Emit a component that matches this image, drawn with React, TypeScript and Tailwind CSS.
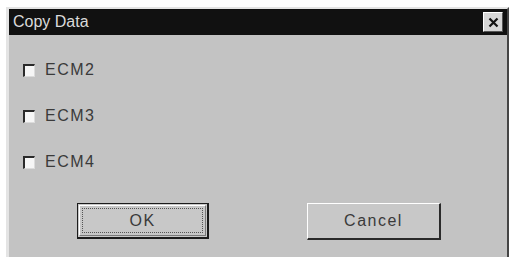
const items = ["ECM2", "ECM3", "ECM4"];

function CheckRow({ label }: { label: string }) {
  return (
    <div className="flex h-[46px] items-center">
      <span className="box-border h-[13px] w-[12px] border-l-2 border-t-2 border-b border-r border-l-[#2a2a2a] border-t-[#2a2a2a] border-b-[#dcdcdc] border-r-[#dcdcdc] bg-[#f6f6f6]" />
      <span className="ml-[10px] text-[16px] leading-none tracking-[1.5px] text-[#3a3a3a]">
        {label}
      </span>
    </div>
  );
}

export default function App() {
  return (
    <div
      className="h-[257px] w-[512px] overflow-hidden bg-white pl-[6px] pt-[7px]"
      style={{ fontFamily: '"Liberation Sans", Arial, sans-serif' }}
    >
      <div className="box-border flex h-[262px] w-[503px] flex-col border-l-[3px] border-r-2 border-t-2 border-l-[#e4e4e4] border-r-[#454545] border-t-[#e4e4e4] bg-[#c3c3c3]">
        {/* title bar */}
        <div className="flex h-[26px] items-center justify-between bg-[#111111] pl-[4px] pr-[4px]">
          <span className="text-[16px] leading-none text-[#dadada]">Copy Data</span>
          <button className="box-border flex h-[20px] w-[20px] items-center justify-center border border-l-white border-t-white border-r-[#555] border-b-[#555] bg-[#d6d6d6]">
            <svg width="11" height="11" viewBox="0 0 11 11">
              <path d="M1.5 1.5 L9.5 9.5 M9.5 1.5 L1.5 9.5" stroke="#111" strokeWidth="2.2" />
            </svg>
          </button>
        </div>

        {/* options */}
        <div className="flex flex-col pl-[14px] pt-[12px]">
          {items.map((it) => (
            <CheckRow key={it} label={it} />
          ))}
        </div>

        {/* buttons */}
        <div className="mt-[18px] flex pl-[68px]">
          <button className="box-border h-[36px] w-[132px] border border-[#1c1c1c] border-b-2 border-r-2 bg-[#c8c8c8] p-[1px]">
            <div className="flex h-full w-full items-center justify-center border border-l-white border-t-white border-b-[#7a7a7a] border-r-[#7a7a7a] p-[2px]">
              <div className="flex h-full w-full items-center justify-center border border-dotted border-[#555]">
                <span className="text-[16px] leading-none tracking-[1.5px] text-[#3a3a3a]">OK</span>
              </div>
            </div>
          </button>
          <button className="ml-[98px] box-border flex h-[37px] w-[134px] items-center justify-center border-l border-t border-b-2 border-r-2 border-l-white border-t-white border-b-[#2a2a2a] border-r-[#2a2a2a] bg-[#c8c8c8]">
            <span className="text-[16px] leading-none tracking-[1.5px] text-[#3a3a3a]">Cancel</span>
          </button>
        </div>
      </div>
    </div>
  );
}
